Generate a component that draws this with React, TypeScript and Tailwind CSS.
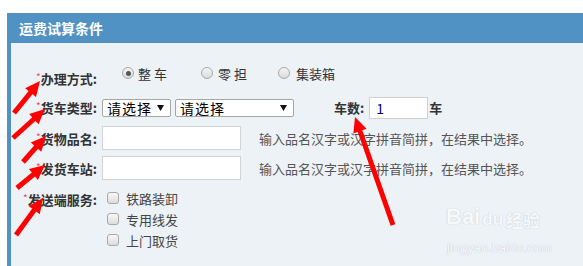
import React from "react";

const cjk = { fontFamily: '"Noto Sans CJK SC", "Noto Sans", sans-serif' };

function Label({ text }: { text: string }) {
  return (
    <div className="w-[86px] shrink-0 text-right text-[13px] font-bold leading-none text-[#333] whitespace-nowrap">
      <span className="text-[10px] font-normal text-[#f45] align-top">*</span>
      {text}:
    </div>
  );
}

function Radio({ checked }: { checked?: boolean }) {
  return (
    <span className="w-[12px] h-[12px] rounded-full border border-[#a8a8a8] bg-gradient-to-b from-[#f4f4f4] to-[#dcdcdc] flex items-center justify-center shrink-0">
      {checked && <span className="w-[5px] h-[5px] rounded-full bg-[#555]" />}
    </span>
  );
}

function Check() {
  return (
    <span className="w-[12px] h-[12px] rounded-[3px] border border-[#a8a8a8] bg-gradient-to-b from-[#f8f8f8] to-[#dddddd] shrink-0" />
  );
}

function Select({ w }: { w: string }) {
  return (
    <div className={`${w} h-[18px] bg-white border border-[#a6a6a6] rounded-[2px] flex items-center justify-between pl-[4px] pr-[6px]`}>
      <span className="text-[14px] leading-none text-black tracking-[1px]">请选择</span>
      <svg width="7" height="6" viewBox="0 0 7 6">
        <polygon points="0,0 7,0 3.5,6" fill="#111" />
      </svg>
    </div>
  );
}

function Arrow({ x1, y1, x2, y2 }: { x1: number; y1: number; x2: number; y2: number }) {
  const dx = x2 - x1;
  const dy = y2 - y1;
  const len = Math.sqrt(dx * dx + dy * dy);
  const ux = dx / len;
  const uy = dy / len;
  const hl = 15;
  const hw = 7;
  const bx = x2 - ux * hl;
  const by = y2 - uy * hl;
  const px = -uy;
  const py = ux;
  return (
    <g>
      <line x1={x1} y1={y1} x2={bx + ux * 2} y2={by + uy * 2} stroke="#ff0000" strokeWidth="5" />
      <polygon
        points={`${x2},${y2} ${bx + px * hw},${by + py * hw} ${bx - px * hw},${by - py * hw}`}
        fill="#ff0000"
      />
    </g>
  );
}

export default function App() {
  return (
    <div className="relative w-[583px] h-[266px] bg-white overflow-hidden pt-[13px] pl-[7px]" style={cjk}>
      <div className="flex flex-col">
        <div className="h-[30px] bg-[#5192c4] flex items-center pl-[12px]">
          <span className="text-white text-[14px] font-bold leading-none">运费试算条件</span>
        </div>
        <div className="h-[223px] border-l-[4px] border-[#5192c4] bg-[#edf2f7] pt-[21px] flex flex-col">
          {/* Row 1 */}
          <div className="h-[28px] flex items-center">
            <Label text="办理方式" />
            <div className="ml-[25px] mb-[10px] flex items-center text-[13px] leading-none text-[#333]">
              <Radio checked />
              <span className="ml-[4px] w-[30px] whitespace-pre">整 车</span>
              <span className="ml-[33px]"><Radio /></span>
              <span className="ml-[5px] w-[31px] whitespace-pre">零 担</span>
              <span className="ml-[29px]"><Radio /></span>
              <span className="ml-[6px]">集装箱</span>
            </div>
          </div>
          {/* Row 2 */}
          <div className="h-[31px] flex items-center">
            <Label text="货车类型" />
            <div className="ml-[5px] flex items-center">
              <Select w="w-[69px]" />
              <div className="ml-[4px]"><Select w="w-[119px]" /></div>
              <span className="ml-[40px] text-[13px] font-bold leading-none text-[#333]">车数:</span>
              <div className="ml-[5px] w-[59px] h-[22px] bg-white border border-[#d0d0d0] flex items-center pl-[6px] text-[14px] leading-none text-[#00007a]">
                1
              </div>
              <span className="ml-[1px] text-[13px] font-bold leading-none text-[#333]">车</span>
            </div>
          </div>
          {/* Row 3 */}
          <div className="h-[30px] flex items-center">
            <Label text="货物品名" />
            <div className="ml-[5px] w-[139px] h-[24px] bg-white border border-[#d3d3d3]" />
            <span className="ml-[18px] text-[13px] leading-none text-[#555]">输入品名汉字或汉字拼音简拼，在结果中选择。</span>
          </div>
          {/* Row 4 */}
          <div className="h-[30px] flex items-center">
            <Label text="发货车站" />
            <div className="ml-[5px] w-[139px] h-[24px] bg-white border border-[#d3d3d3]" />
            <span className="ml-[18px] text-[13px] leading-none text-[#555]">输入品名汉字或汉字拼音简拼，在结果中选择。</span>
          </div>
          {/* Row 5 */}
          <div className="flex items-start pt-[9px]">
            <div className="pt-[1px]">
              <Label text="发送端服务" />
            </div>
            <div className="ml-[10px] flex flex-col gap-[9px]">
              {["铁路装卸", "专用线发", "上门取货"].map((t) => (
                <div key={t} className="flex items-center h-[12px]">
                  <Check />
                  <span className="ml-[7px] text-[13px] leading-none text-[#444]">{t}</span>
                </div>
              ))}
            </div>
          </div>
        </div>
      </div>

      {/* watermark */}
      <div className="absolute left-[446px] top-[206px] flex items-end text-[#f6f8fa] [text-shadow:0_0_1px_#c9d0d8,0_0_1px_#c9d0d8]">
        <span className="text-[22px] font-bold leading-none" style={{ fontFamily: '"Liberation Sans", Arial, sans-serif' }}>Bai</span>
        <span className="relative text-[17px] font-bold leading-none ml-[2px]" style={{ fontFamily: '"Liberation Sans", Arial, sans-serif' }}>du</span>
        <span className="text-[17px] font-bold leading-none ml-[3px]">经验</span>
      </div>
      <div
        className="absolute left-[447px] top-[241px] text-[13px] leading-none text-[#f6f8fa] [text-shadow:0_0_1px_#c9d0d8,0_0_1px_#c9d0d8]"
        style={{ fontFamily: '"Liberation Sans", Arial, sans-serif' }}
      >
        jingyan.baidu.com
      </div>

      {/* annotation arrows */}
      <svg className="absolute left-0 top-0 pointer-events-none" width="583" height="266" viewBox="0 0 583 266">
        <Arrow x1={14} y1={113} x2={40} y2={81} />
        <Arrow x1={13} y1={138} x2={45} y2={109} />
        <Arrow x1={23} y1={162} x2={46} y2={136} />
        <Arrow x1={17} y1={188} x2={45} y2={165} />
        <Arrow x1={16} y1={235} x2={43} y2={198} />
        <Arrow x1={393} y1={225} x2={355} y2={117} />
      </svg>
    </div>
  );
}
